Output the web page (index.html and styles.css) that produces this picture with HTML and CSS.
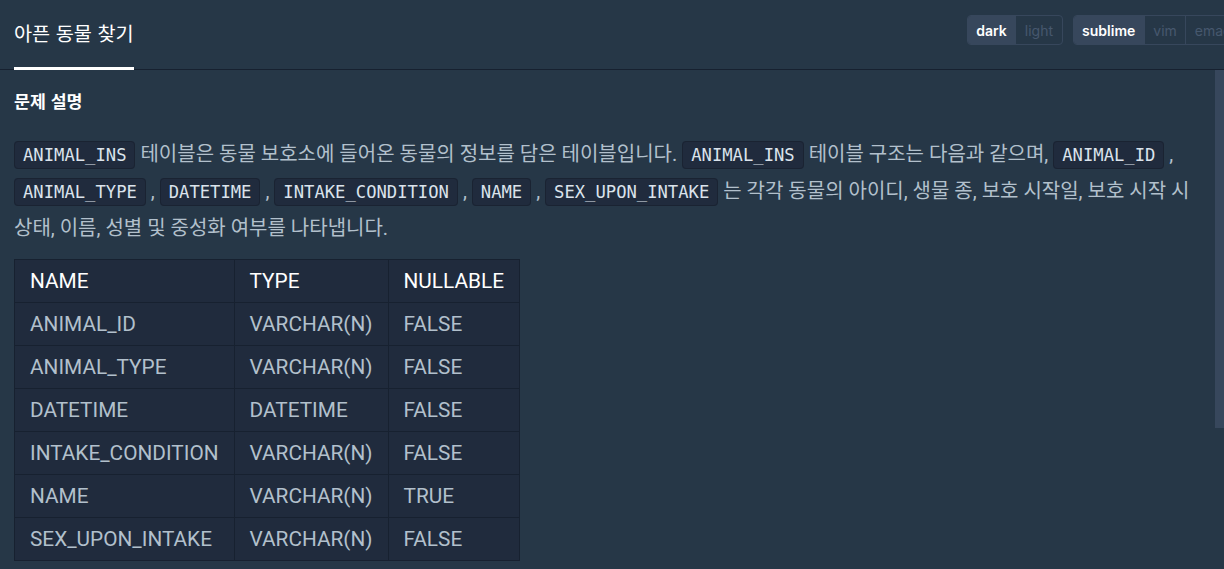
FILE: index.html
```html
<!DOCTYPE html>
<html lang="ko">
<head>
<meta charset="utf-8">
<title>아픈 동물 찾기</title>
<link rel="stylesheet" href="styles.css">
</head>
<body>
<div class="app">
  <header class="header">
    <nav class="tabs">
      <a class="tab active">아픈 동물 찾기</a>
    </nav>
    <div class="toggles">
      <div class="btn-group">
        <button class="btn on">dark</button>
        <button class="btn">light</button>
      </div>
      <div class="btn-group">
        <button class="btn on">sublime</button>
        <button class="btn">vim</button>
        <button class="btn">emacs</button>
      </div>
    </div>
  </header>
  <main class="content">
    <div class="guide">
      <h6 class="guide-title">문제 설명</h6>
      <p class="desc"><code>ANIMAL_INS</code> 테이블은 동물 보호소에 들어온 동물의 정보를 담은 테이블입니다. <code>ANIMAL_INS</code> 테이블 구조는 다음과 같으며, <code>ANIMAL_ID</code> , <code>ANIMAL_TYPE</code> , <code>DATETIME</code> , <code>INTAKE_CONDITION</code> , <code>NAME</code> , <code>SEX_UPON_INTAKE</code> 는 각각 동물의 아이디, 생물 종, 보호 시작일, 보호 시작 시 상태, 이름, 성별 및 중성화 여부를 나타냅니다.</p>
      <table class="schema">
        <thead>
          <tr><th>NAME</th><th>TYPE</th><th>NULLABLE</th></tr>
        </thead>
        <tbody>
          <tr><td>ANIMAL_ID</td><td>VARCHAR(N)</td><td>FALSE</td></tr>
          <tr><td>ANIMAL_TYPE</td><td>VARCHAR(N)</td><td>FALSE</td></tr>
          <tr><td>DATETIME</td><td>DATETIME</td><td>FALSE</td></tr>
          <tr><td>INTAKE_CONDITION</td><td>VARCHAR(N)</td><td>FALSE</td></tr>
          <tr><td>NAME</td><td>VARCHAR(N)</td><td>TRUE</td></tr>
          <tr><td>SEX_UPON_INTAKE</td><td>VARCHAR(N)</td><td>FALSE</td></tr>
        </tbody>
      </table>
      <p class="desc">동물 보호소에 들어온 동물 중 아픈 동물의 아이디와 이름을 조회하는 SQL 문을 작성해주세요. 이때 결과는 아이디 순으로 조회해주세요.</p>
    </div>
    <div class="scroll-thumb" aria-hidden="true"></div>
  </main>
</div>
</body>
</html>
```

FILE: styles.css
```css
html, body {
  margin: 0;
  padding: 0;
  height: 100%;
  overflow: hidden;
  background: #263747;
}

body {
  font-family: Roboto, "Noto Sans CJK KR", sans-serif;
  color: #b2c0cc;
}

.app {
  display: flex;
  flex-direction: column;
  height: 100%;
}

.header {
  display: flex;
  align-items: flex-start;
  justify-content: space-between;
  height: 69px;
  border-bottom: 1px solid #172130;
  margin-right: -38px;
  padding: 0 14px;
  flex-shrink: 0;
}

.tabs {
  display: flex;
}

.tab {
  display: flex;
  align-items: center;
  box-sizing: border-box;
  height: 70px;
  padding-bottom: 2px;
  border-bottom: 3px solid #ffffff;
  font-family: "Noto Sans CJK KR", sans-serif;
  font-size: 19.7px;
  color: #ffffff;
}

.toggles {
  display: flex;
  gap: 10px;
  margin-top: 15px;
}

.btn-group {
  display: flex;
  border: 1px solid #37475c;
  border-radius: 4px;
  overflow: hidden;
}

.btn {
  font-family: Inter, Roboto, sans-serif;
  font-size: 14px;
  height: 28px;
  padding: 0 8.5px;
  border: 0;
  border-left: 1px solid #37475c;
  background: transparent;
  color: #46586e;
}

.btn:first-child {
  border-left: 0;
}

.btn.on {
  background: #37475c;
  color: #ffffff;
  font-weight: 600;
}

.content {
  position: relative;
  flex: 1;
  overflow: hidden;
  min-height: 0;
}

.scroll-thumb {
  position: absolute;
  top: 0;
  right: 0;
  width: 9px;
  height: 358px;
  background: #37475c;
}

.guide {
  padding: 18px 23px 0 14px;
}

.guide-title {
  margin: 0 0 22px;
  font-family: "Noto Sans CJK KR", sans-serif;
  font-size: 17.3px;
  line-height: 26px;
  font-weight: 700;
  color: #ffffff;
}

.desc {
  margin: 0 0 13px;
  font-size: 20px;
  line-height: 36px;
}

.desc code {
  font-family: "DejaVu Sans Mono", monospace;
  font-size: 17.2px;
  padding: 3px 8px;
  background: #202b3d;
  border: 1px solid #1a2332;
  border-radius: 4px;
  color: #dbe3ec;
}

.schema {
  border-collapse: collapse;
  background: #202b3d;
  font-size: 20.8px;
  margin-bottom: 24px;
}

.schema th,
.schema td {
  height: 42px;
  padding: 0 15px;
  border: 1px solid #172130;
  text-align: left;
  vertical-align: middle;
}

.schema th {
  font-weight: 400;
  color: #ffffff;
}

.schema td {
  color: #b2c0cc;
}
```
